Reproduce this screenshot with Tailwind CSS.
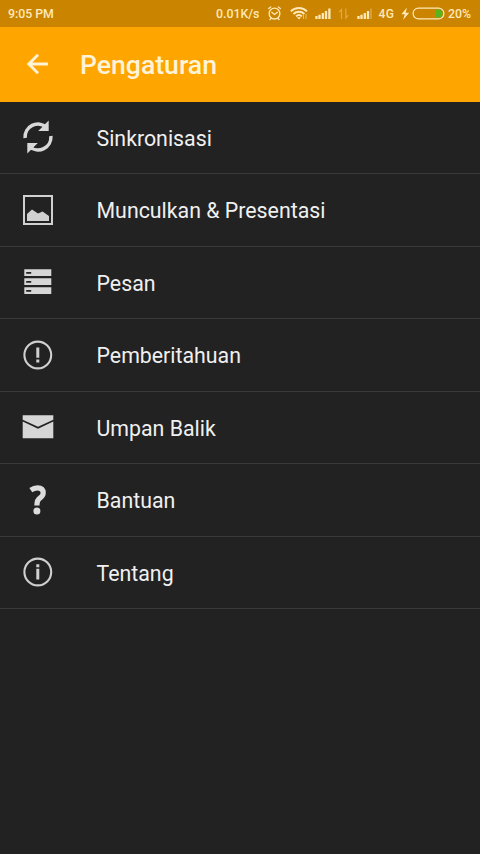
<!DOCTYPE html>
<html lang="id">
<head>
<meta charset="utf-8">
<title>Pengaturan</title>
<script src="https://cdn.jsdelivr.net/npm/@tailwindcss/browser@4"></script>
</head>
<body class="h-[854px] w-[480px] overflow-hidden bg-[#222222] font-['Roboto','Noto_Sans',sans-serif] text-[#f0f0f0]">
<div class="flex h-[27px] items-center bg-[#ca8400] pl-2 pr-2 text-[12.3px] font-medium text-[#ffe9b8]">
  <span class="w-[208px] whitespace-nowrap pt-[2px] leading-[27px]">9:05 PM</span>
  <span class="w-[52px] whitespace-nowrap pt-[2px] leading-[27px]">0.01K/s</span>
  <svg class="h-[27px] w-[130px] shrink-0" viewBox="268 0 130 27" fill="none">
    <g stroke="#ffe9b8" stroke-width="1.3" stroke-linecap="round">
      <circle cx="274.5" cy="13.6" r="5.4"/>
      <path d="M268.7 8.5l2-1.6M280.3 8.5l-2-1.6M271.8 12.3l2.7 2.2 3-2.2M271 18.5l-1 1M278 18.5l1 1"/>
    </g>
    <g stroke="#ffe9b8" stroke-width="1.9">
      <path d="M290.8 11.3a11.5 11.5 0 0 1 16.2 0M293.4 14a8 8 0 0 1 11 0M296 16.4a4.5 4.5 0 0 1 6 0"/>
    </g>
    <path d="M296.8 17.2h4.4l-2.2 2.3z" fill="#ffe9b8"/>
    <path d="M303.5 14v5M306 19v-5" stroke="#e9bd66" stroke-width="1"/>
    <path d="M316.5 19v-3M319.5 19v-4.2M322.8 19v-6M326 19V11M329.4 19V8.5" stroke="#ffe9b8" stroke-width="2.3"/>
    <path d="M341.5 19V9.5l-2.4 2.7M345.8 8.5V18l2.4-2.7" stroke="#e0aa49" stroke-width="1.2"/>
    <path d="M358.5 19v-3M361.5 19v-4.2M364.8 19v-6M368 19V11" stroke="#ffe9b8" stroke-width="2.3"/>
    <path d="M371 19V8.5" stroke="#dda643" stroke-width="1.6"/>
    <text x="378.5" y="18.4" fill="#ffe9b8" font-size="12" font-weight="500" textLength="15.5">4G</text>
  </svg>
  <svg class="h-[27px] w-[50px] shrink-0" viewBox="398 0 50 27" fill="none">
    <path d="M407 7.5l-5.6 6.8h3.4l-1.8 5.7 6.2-7.3h-3.6z" fill="#ffe9b8"/>
    <rect x="413.1" y="8.1" width="30.8" height="10.8" rx="5.4" stroke="#ffe9b8" stroke-width="1.2"/>
    <path d="M436 9.5h2.5a4 4 0 0 1 0 8H436z" fill="#55b51c"/>
  </svg>
  <span class="whitespace-nowrap pt-[2px] leading-[27px]">20%</span>
</div>
<header class="flex h-[74.5px] items-center bg-[#ffa500] text-[#fff3d8]">
  <svg class="ml-[22px] h-8 w-8" viewBox="0 0 32 32" fill="none" stroke="currentColor" stroke-width="2.9"><path d="M26 16H7M16 6.8L6.8 16l9.2 9.2"/></svg>
  <h1 class="ml-[26px] pt-[2px] text-[26.6px] font-medium leading-[32px]">Pengaturan</h1>
</header>
<main class="text-[21.33px] leading-[26px]">
  <div class="flex h-[72.5px] items-center border-b border-[#393939] pl-[18px]">
    <svg class="h-10 w-10 text-[#d8d8d8]" viewBox="0 0 40 40" fill="none" stroke="currentColor" stroke-width="3.5"><path d="M7.1 21A12.9 12.9 0 0 1 28.5 10.3M32.9 19A12.9 12.9 0 0 1 11.5 29.7"/><path d="M30.7 3.5v10.5h-10.5zM9.3 36.5V26h10.5z" fill="currentColor" stroke="none"/></svg>
    <span class="ml-[38.5px] pt-[3px]">Sinkronisasi</span>
  </div>
  <div class="flex h-[72.5px] items-center border-b border-[#393939] pl-[18px]">
    <svg class="h-10 w-10 text-[#d0d0d0]" viewBox="0 0 40 40" fill="currentColor"><path d="M6 6h28v28H6z" fill="none" stroke="currentColor" stroke-width="2"/><path d="M9 31v-7l5-4.5 6 4 4.5-2 6.5 4.5v5z"/></svg>
    <span class="ml-[38.5px] pt-[3px]">Munculkan &amp; Presentasi</span>
  </div>
  <div class="flex h-[72.5px] items-center border-b border-[#393939] pl-[18px]">
    <svg class="h-10 w-10" viewBox="0 0 40 40" fill="#d6d6d6"><path d="M6.3 7.3h27v6.7h-27zM6.3 16.3h27V23h-27zM6.3 25.3h27V32h-27z"/><path d="M8.2 10.8h5M8.2 19.8h5M8.2 28.8h5" stroke="#222" stroke-width="1.7"/></svg>
    <span class="ml-[38.5px] pt-[3px]">Pesan</span>
  </div>
  <div class="flex h-[72.5px] items-center border-b border-[#393939] pl-[18px]">
    <svg class="h-10 w-10" viewBox="0 0 40 40" fill="none" stroke="#d0d0d0"><circle cx="19.8" cy="20" r="13.4" stroke-width="2.1"/><path d="M19.8 12.5v10.3M19.8 24.5v3" stroke-width="3"/></svg>
    <span class="ml-[38.5px] pt-[3px]">Pemberitahuan</span>
  </div>
  <div class="flex h-[72.5px] items-center border-b border-[#393939] pl-[18px]">
    <svg class="h-10 w-10" viewBox="0 0 40 40" fill="#d6d6d6"><path d="M4.7 8.3h30.6v4.4L20 19.8 4.7 12.7zM4.7 14.5L20 21.8l15.3-7.3v16.7H4.7z"/></svg>
    <span class="ml-[38.5px] pt-[3px]">Umpan Balik</span>
  </div>
  <div class="flex h-[72.5px] items-center border-b border-[#393939] pl-[18px]">
    <svg class="h-10 w-10" viewBox="0 0 40 40" fill="none"><path d="M12.8 10.1Q16 7.9 19.5 7.9Q25.2 7.9 25.2 13Q25.2 15.8 22 18Q18.9 20 18.9 25.5" stroke="#dcdcdc" stroke-width="5.2"/><circle cx="18.9" cy="30.9" r="3.5" fill="#dcdcdc"/></svg>
    <span class="ml-[38.5px] pt-[3px]">Bantuan</span>
  </div>
  <div class="flex h-[72.5px] items-center border-b border-[#393939] pl-[18px]">
    <svg class="h-10 w-10" viewBox="0 0 40 40" fill="none" stroke="#d0d0d0"><circle cx="19.8" cy="20" r="13.4" stroke-width="2.1"/><path d="M19.8 12.3v3M19.8 16.8v10.6" stroke-width="3"/></svg>
    <span class="ml-[38.5px] pt-[3px]">Tentang</span>
  </div>
</main>
</body>
</html>
